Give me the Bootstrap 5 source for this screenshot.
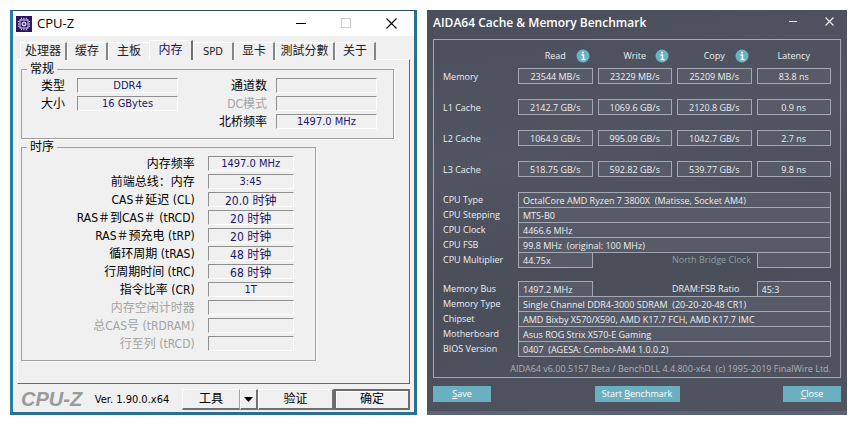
<!DOCTYPE html>
<html lang="zh-CN">
<head>
<meta charset="utf-8">
<meta name="viewport" content="width=device-width, initial-scale=1">
<title>CPU-Z / AIDA64</title>
<link href="https://cdn.jsdelivr.net/npm/bootstrap@5.3.0/dist/css/bootstrap.min.css" rel="stylesheet">
<style>
  body { background: #fff; }
  .desk { display: grid; grid-template-columns: 407fr 420fr; gap: 10px; padding: 10px; }
  .desk input { min-width: 0; width: 100%; border-radius: 0; outline: 0; margin: 0; }
  .desk button { border-radius: 0; }

  /* CPU-Z */
  .cz { font: 12px/15px "DejaVu Sans Condensed", "Noto Sans CJK SC", sans-serif; color: #000; background: #f0f0f0;
        border: 3px solid #2a7096; border-top: 1px solid #2b4f6b; border-left-color: #2580a4; }
  .cz-bar { height: 25px; background: #fff; padding-left: 3px; }
  .cz-bar h1 { font: 13px/15px "Open Sans", sans-serif; margin-left: 5px; }
  .winbtn { border: 0; background: none; padding: 0; line-height: 0; color: inherit; }
  .cz-bar .winbtn { width: 45px; height: 25px; }
  .cz-tabs { height: 20px; padding-left: 3px; margin-bottom: -1px; }
  .cz-tab { border: 0; border-top: 1px solid #fff; border-left: 1px solid #fff; border-right: 2px solid #858585;
            background: #f0f0f0; height: 18px; padding: 0; color: #222; flex: 0 1 41px; white-space: nowrap; line-height: 17px; }
  .cz-tab.wide3 { flex-basis: 47px; }
  .cz-tab.wide4 { flex-basis: 60px; }
  .cz-tab.before { border-right: 0; }
  .cz-tab.active { height: 20px; flex-basis: 44px; color: #10107a; border-right-color: #707070; }
  .cz-tab.latin { font-size: 11px; }
  .cz-panel { border: 1px solid #fff; border-right: 1px solid #696969; border-bottom: 1px solid #696969; padding: 0 15px 22px 3px; }
  .cz-group { border: 1px solid #a0a0a0; padding: 0 16px 9px 0; box-shadow: 1px 1px 0 #fff; }
  .cz-group + .cz-group { margin-top: -1px; padding: 0 21px 9px 0; width: 79%; }
  .cz-group legend { float: none; width: auto; margin: 0 0 0 5px; padding: 0 3px; font-size: 12px; line-height: 18px; }
  .pairs { display: grid; grid-auto-rows: 15px; row-gap: 3px; }
  .pairs label { text-align: right; white-space: nowrap; line-height: 17px; }
  .pairs.general { grid-template-columns: 55px 101px 1fr 101px; }
  .pairs.general label { padding-right: 12px; }
  .pairs.general label.second { grid-column-start: 3; padding-right: 9px; }
  .pairs.timing { grid-template-columns: 1fr 86px; }
  .pairs.timing label { padding-right: 13px; }
  .pairs label.off { color: #a3a3a3; }
  .pairs input { height: 15px; padding: 0; text-align: center; color: #17176e; background: #f0f0f0; font-size: 11px; line-height: 13px;
                 border: 1px solid #fff; border-top-color: #8f8f8f; border-left-color: #8f8f8f; }
  .pairs input.cjk { font-size: 12px; }
  .cz-logo { font: italic bold 20px/20px "Liberation Sans", sans-serif; color: #9a9a9a; }
  .cz-ver { font-size: 11px; line-height: 22px; white-space: nowrap; }
  .cz-foot { padding-top: 5px; padding-bottom: 1px; }
  .cz-btn { height: 21px; padding: 0; width: 76px; background: #f0f0f0; color: #000; line-height: 17px;
            border: 1px solid #fff; border-right: 2px solid #707070; border-bottom: 2px solid #707070; }
  .cz-btn.main-act { border: 2px solid #6c6c6c; box-shadow: inset 1px 1px 0 #fff; }
  .cz-btn.tool { width: 58px; border-right: 1px solid #a0a0a0; }
  .cz-btn.drop { width: 18px; line-height: 0; }

  /* AIDA64 */
  .ai { font: 9px/14px "Open Sans", sans-serif; color: #eceef1;
        background: linear-gradient(170deg, #4b4f5b, #515562 35%, #494e59 60%, #505461); border-bottom: 4px solid #5b6476; padding: 0 6px 7px; }
  .ai-bar { height: 29px; }
  .ai-bar h2 { font-size: 12px; line-height: 15px; font-weight: 600; color: #fff; padding-top: 5px; }
  .ai-bar .winbtn { width: 24px; height: 22px; }
  .ai-bar .winbtn.min { width: 48px; }
  .ai-box { border: 1px solid #a3a7b1; padding: 0 9px; }
  .bench { width: 100%; table-layout: fixed; border-collapse: collapse; }
  .bench th { font-weight: 400; }
  .bench .rowhead { width: 70px; }
  .bench thead th { height: 28px; padding: 4px 0 0 5px; text-align: center; }
  .bench tbody th, .bench td { height: 31px; padding: 0; vertical-align: top; line-height: 17px; }
  .bench td { padding-left: 5px; }
  .bench td input { text-align: center; }
  .ai input { display: block; height: 16px; padding: 0 4px; color: #eceef1; background: #575b67; border: 1px solid #a3a7b1; font-size: 9px; line-height: 14px; }
  .hd { display: grid; grid-template-columns: 1fr auto 1fr; align-items: center; }
  .hd button { grid-column: 3; justify-self: end; margin-right: 3px; }
  .hd > span { grid-column: 2; }
  .info { display: grid; grid-template-columns: 70px repeat(4, minmax(0, 1fr)); grid-auto-rows: 15px; padding-bottom: 1px; }
  .info label { line-height: 16px; white-space: nowrap; grid-column: 1; }
  .info label.right { grid-column: 4; }
  .info label.dim { color: #8da09f; }
  .info > div { padding-left: 5px; grid-column: span 4; }
  .info > div.one { grid-column: span 1; }
  .info + .info { margin-top: 13px; }
  .about { color: #adb0b8; line-height: 14px; padding: 5px 0 1px; text-align: right; white-space: nowrap; }
  .ai-btn { border: 0; background: #6bb0c0; color: #fff; height: 16px; padding: 0; width: 58px; line-height: 16px; }
  .ai-btn.wide { width: 85px; }
</style>
<script src="https://cdn.jsdelivr.net/npm/bootstrap@5.3.0/dist/js/bootstrap.bundle.min.js"></script>
</head>
<body>
<main class="desk">
  <section class="cz d-flex flex-column">
    <header class="cz-bar d-flex align-items-center">
      <svg width="16" height="16" viewBox="0 0 16 16" aria-hidden="true">
        <rect width="16" height="16" fill="#2c1260"/>
        <rect x="4" y="4" width="8" height="8" fill="none" stroke="#e8dff5"/>
        <circle cx="8" cy="8" r="2" fill="#6b4aa8" stroke="#fff"/>
        <path d="M5 2.5h6M5 13.5h6M2.5 5v6M13.5 5v6" stroke="#e8dff5" stroke-width="1.4" stroke-dasharray="1 1.4"/>
      </svg>
      <h1 class="mb-0 flex-grow-1">CPU-Z</h1>
      <button class="winbtn" type="button" aria-label="最小化"><svg width="11" height="11"><path d="M0 5.5h10" stroke="#000"/></svg></button>
      <button class="winbtn" type="button" aria-label="最大化" disabled><svg width="11" height="11"><rect x=".5" y=".5" width="9" height="9" fill="none" stroke="#ccc"/></svg></button>
      <button class="winbtn" type="button" aria-label="关闭"><svg width="11" height="11"><path d="M.5.5l10 10M10.5.5l-10 10" stroke="#000" stroke-width="1.1"/></svg></button>
    </header>
    <div class="px-1 pt-1">
      <div class="cz-tabs d-flex align-items-end" role="tablist">
        <button class="cz-tab wide3" type="button" role="tab">处理器</button>
        <button class="cz-tab" type="button" role="tab">缓存</button>
        <button class="cz-tab before" type="button" role="tab">主板</button>
        <button class="cz-tab active" type="button" role="tab" aria-selected="true">内存</button>
        <button class="cz-tab latin" type="button" role="tab">SPD</button>
        <button class="cz-tab" type="button" role="tab">显卡</button>
        <button class="cz-tab wide4" type="button" role="tab">測試分數</button>
        <button class="cz-tab" type="button" role="tab">关于</button>
      </div>
      <div class="cz-panel" role="tabpanel">
        <fieldset class="cz-group">
          <legend>常规</legend>
          <div class="pairs general">
            <label for="c1">类型</label><input id="c1" readonly value="DDR4">
            <label for="c2" class="second">通道数</label><input id="c2" readonly>
            <label for="c3">大小</label><input id="c3" readonly value="16 GBytes">
            <label for="c4" class="second off">DC模式</label><input id="c4" readonly>
            <label for="c5" class="second">北桥频率</label><input id="c5" readonly value="1497.0 MHz">
          </div>
        </fieldset>
        <fieldset class="cz-group">
          <legend>时序</legend>
          <div class="pairs timing">
            <label for="t1">内存频率</label><input id="t1" readonly value="1497.0 MHz">
            <label for="t2">前端总线：内存</label><input id="t2" readonly value="3:45">
            <label for="t3">CAS＃延迟 (CL)</label><input id="t3" class="cjk" readonly value="20.0 时钟">
            <label for="t4">RAS＃到CAS＃ (tRCD)</label><input id="t4" class="cjk" readonly value="20 时钟">
            <label for="t5">RAS＃预充电 (tRP)</label><input id="t5" class="cjk" readonly value="20 时钟">
            <label for="t6">循环周期 (tRAS)</label><input id="t6" class="cjk" readonly value="48 时钟">
            <label for="t7">行周期时间 (tRC)</label><input id="t7" class="cjk" readonly value="68 时钟">
            <label for="t8">指令比率 (CR)</label><input id="t8" readonly value="1T">
            <label for="t9" class="off">内存空闲计时器</label><input id="t9" readonly>
            <label for="t10" class="off">总CAS号 (tRDRAM)</label><input id="t10" readonly>
            <label for="t11" class="off">行至列 (tRCD)</label><input id="t11" readonly>
          </div>
        </fieldset>
      </div>
      <footer class="cz-foot d-flex">
        <span class="cz-logo ps-1">CPU-Z</span>
        <span class="cz-ver ms-auto me-auto">Ver. 1.90.0.x64</span>
        <div class="d-flex">
          <button class="cz-btn tool" type="button">工具</button>
          <button class="cz-btn drop" type="button" aria-label="工具菜单"><svg width="9" height="5"><path d="M0 0h9L4.500 5z"/></svg></button>
          <button class="cz-btn" type="button">验证</button>
          <button class="cz-btn main-act" type="button">确定</button>
        </div>
      </footer>
    </div>
  </section>

  <section class="ai" lang="en">
    <header class="ai-bar d-flex">
      <h2 class="mb-0 flex-grow-1 text-nowrap">AIDA64 Cache &amp; Memory Benchmark</h2>
      <button class="winbtn min" type="button" aria-label="Minimize"><svg width="9" height="9"><path d="M0 4.500h8" stroke="#e6e8ec"/></svg></button>
      <button class="winbtn" type="button" aria-label="Close window"><svg width="9" height="9"><path d="M.5.5l8 8M8.500.5l-8 8" stroke="#e6e8ec" stroke-width="1.200"/></svg></button>
    </header>
    <div class="ai-box">
      <table class="bench">
        <thead>
          <tr>
            <th class="rowhead"></th>
            <th scope="col"><div class="hd"><span>Read</span><button class="winbtn" type="button" aria-label="About read"><svg width="14" height="14"><circle cx="7" cy="7" r="6.500" fill="#68b3c6"/><path d="M5.500 6h2v4M5.500 10.500h4" stroke="#fff" stroke-width="1.400" fill="none"/><circle cx="7" cy="3.500" r="1.100" fill="#fff"/></svg></button></div></th>
            <th scope="col"><div class="hd"><span>Write</span><button class="winbtn" type="button" aria-label="About write"><svg width="14" height="14"><circle cx="7" cy="7" r="6.500" fill="#68b3c6"/><path d="M5.500 6h2v4M5.500 10.500h4" stroke="#fff" stroke-width="1.400" fill="none"/><circle cx="7" cy="3.500" r="1.100" fill="#fff"/></svg></button></div></th>
            <th scope="col"><div class="hd"><span>Copy</span><button class="winbtn" type="button" aria-label="About copy"><svg width="14" height="14"><circle cx="7" cy="7" r="6.500" fill="#68b3c6"/><path d="M5.500 6h2v4M5.500 10.500h4" stroke="#fff" stroke-width="1.400" fill="none"/><circle cx="7" cy="3.500" r="1.100" fill="#fff"/></svg></button></div></th>
            <th scope="col">Latency</th>
          </tr>
        </thead>
        <tbody>
          <tr><th scope="row">Memory</th>
            <td><input readonly aria-label="Memory read" value="23544 MB/s"></td><td><input readonly aria-label="Memory write" value="23229 MB/s"></td>
            <td><input readonly aria-label="Memory copy" value="25209 MB/s"></td><td><input readonly aria-label="Memory latency" value="83.8 ns"></td></tr>
          <tr><th scope="row">L1 Cache</th>
            <td><input readonly aria-label="L1 read" value="2142.7 GB/s"></td><td><input readonly aria-label="L1 write" value="1069.6 GB/s"></td>
            <td><input readonly aria-label="L1 copy" value="2120.8 GB/s"></td><td><input readonly aria-label="L1 latency" value="0.9 ns"></td></tr>
          <tr><th scope="row">L2 Cache</th>
            <td><input readonly aria-label="L2 read" value="1064.9 GB/s"></td><td><input readonly aria-label="L2 write" value="995.09 GB/s"></td>
            <td><input readonly aria-label="L2 copy" value="1042.7 GB/s"></td><td><input readonly aria-label="L2 latency" value="2.7 ns"></td></tr>
          <tr><th scope="row">L3 Cache</th>
            <td><input readonly aria-label="L3 read" value="518.75 GB/s"></td><td><input readonly aria-label="L3 write" value="592.82 GB/s"></td>
            <td><input readonly aria-label="L3 copy" value="539.77 GB/s"></td><td><input readonly aria-label="L3 latency" value="9.8 ns"></td></tr>
        </tbody>
      </table>
      <div class="info">
        <label for="a1">CPU Type</label><div><input id="a1" readonly value="OctalCore AMD Ryzen 7 3800X  (Matisse, Socket AM4)"></div>
        <label for="a2">CPU Stepping</label><div><input id="a2" readonly value="MTS-B0"></div>
        <label for="a3">CPU Clock</label><div><input id="a3" readonly value="4466.6 MHz"></div>
        <label for="a4">CPU FSB</label><div><input id="a4" readonly value="99.8 MHz  (original: 100 MHz)"></div>
        <label for="a5">CPU Multiplier</label><div class="one"><input id="a5" readonly value="44.75x"></div>
        <label for="a6" class="right dim">North Bridge Clock</label><div class="one"><input id="a6" readonly></div>
      </div>
      <div class="info">
        <label for="b1">Memory Bus</label><div class="one"><input id="b1" readonly value="1497.2 MHz"></div>
        <label for="b2" class="right">DRAM:FSB Ratio</label><div class="one"><input id="b2" readonly value="45:3"></div>
        <label for="b3">Memory Type</label><div><input id="b3" readonly value="Single Channel DDR4-3000 SDRAM  (20-20-20-48 CR1)"></div>
        <label for="b4">Chipset</label><div><input id="b4" readonly value="AMD Bixby X570/X590, AMD K17.7 FCH, AMD K17.7 IMC"></div>
        <label for="b5">Motherboard</label><div><input id="b5" readonly value="Asus ROG Strix X570-E Gaming"></div>
        <label for="b6">BIOS Version</label><div><input id="b6" readonly value="0407  (AGESA: Combo-AM4 1.0.0.2)"></div>
      </div>
      <p class="about mb-0">AIDA64 v6.00.5157 Beta / BenchDLL 4.4.800-x64&nbsp; (c) 1995-2019 FinalWire Ltd.</p>
    </div>
    <footer class="d-flex justify-content-between pt-2">
      <button class="ai-btn" type="button"><u>S</u>ave</button>
      <button class="ai-btn wide" type="button">Start <u>B</u>enchmark</button>
      <button class="ai-btn" type="button"><u>C</u>lose</button>
    </footer>
  </section>
</main>
</body>
</html>
